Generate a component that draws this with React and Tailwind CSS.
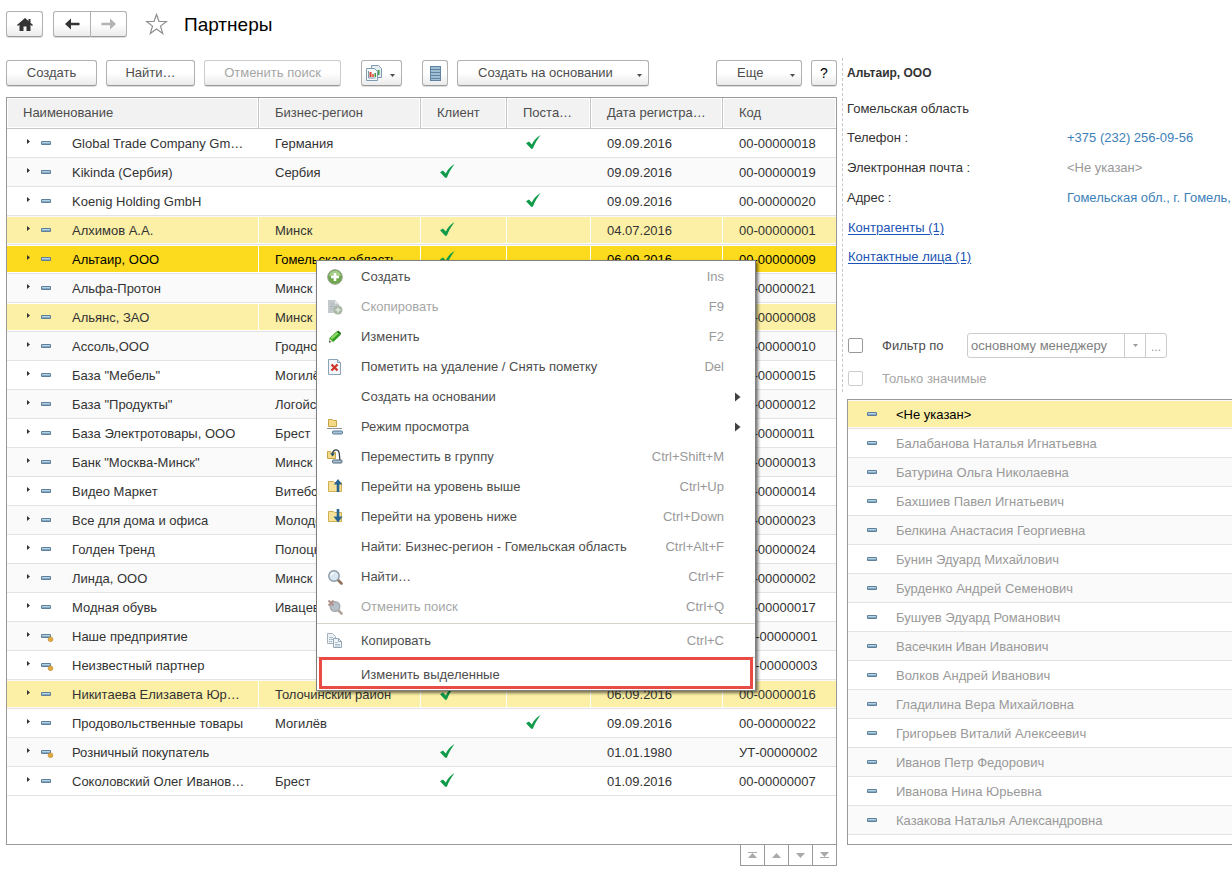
import { useState } from "react";
import clsx from "clsx";

const partners = [
  { name: "Global Trade Company Gm…", region: "Германия", supplier: true, date: "09.09.2016", code: "00-00000018" },
  { name: "Kikinda (Сербия)", region: "Сербия", client: true, date: "09.09.2016", code: "00-00000019" },
  { name: "Koenig Holding GmbH", region: "", supplier: true, date: "09.09.2016", code: "00-00000020" },
  { name: "Алхимов А.А.", region: "Минск", client: true, date: "04.07.2016", code: "00-00000001", marked: true },
  { name: "Альтаир, ООО", region: "Гомельская область", client: true, date: "06.09.2016", code: "00-00000009", current: true },
  { name: "Альфа-Протон", region: "Минск", date: "09.09.2016", code: "00-00000021" },
  { name: "Альянс, ЗАО", region: "Минск", date: "06.09.2016", code: "00-00000008", marked: true },
  { name: "Ассоль,ООО", region: "Гродно", date: "06.09.2016", code: "00-00000010" },
  { name: 'База "Мебель"', region: "Могилёв", date: "06.09.2016", code: "00-00000015" },
  { name: 'База "Продукты"', region: "Логойск", date: "06.09.2016", code: "00-00000012" },
  { name: "База Электротовары, ООО", region: "Брест", date: "06.09.2016", code: "00-00000011" },
  { name: 'Банк "Москва-Минск"', region: "Минск", date: "06.09.2016", code: "00-00000013" },
  { name: "Видео Маркет", region: "Витебск", date: "06.09.2016", code: "00-00000014" },
  { name: "Все для дома и офиса", region: "Молодечно", date: "09.09.2016", code: "00-00000023" },
  { name: "Голден Тренд", region: "Полоцк", date: "09.09.2016", code: "00-00000024" },
  { name: "Линда, ООО", region: "Минск", date: "04.07.2016", code: "00-00000002" },
  { name: "Модная обувь", region: "Ивацевичи", date: "06.09.2016", code: "00-00000017" },
  { name: "Наше предприятие", region: "", date: "01.01.1980", code: "УТ-00000001", predefined: true },
  { name: "Неизвестный партнер", region: "", date: "01.01.1980", code: "УТ-00000003", predefined: true },
  { name: "Никитаева Елизавета Юр…", region: "Толочинский район", client: true, date: "06.09.2016", code: "00-00000016", marked: true },
  { name: "Продовольственные товары", region: "Могилёв", supplier: true, date: "09.09.2016", code: "00-00000022" },
  { name: "Розничный покупатель", region: "", client: true, date: "01.01.1980", code: "УТ-00000002", predefined: true },
  { name: "Соколовский Олег Иванов…", region: "Брест", client: true, date: "01.09.2016", code: "00-00000007" },
];

const managers = [
  "<Не указан>",
  "Балабанова Наталья Игнатьевна",
  "Батурина Ольга Николаевна",
  "Бахшиев Павел Игнатьевич",
  "Белкина Анастасия Георгиевна",
  "Бунин Эдуард Михайлович",
  "Бурденко Андрей Семенович",
  "Бушуев Эдуард Романович",
  "Васечкин Иван Иванович",
  "Волков Андрей Иванович",
  "Гладилина Вера Михайловна",
  "Григорьев Виталий Алексеевич",
  "Иванов Петр Федорович",
  "Иванова Нина Юрьевна",
  "Казакова Наталья Александровна",
];

const menuItems = [
  { label: "Создать", keys: "Ins", icon: "add" },
  { label: "Скопировать", keys: "F9", icon: "clone", disabled: true },
  { label: "Изменить", keys: "F2", icon: "pencil" },
  { label: "Пометить на удаление / Снять пометку", keys: "Del", icon: "mark" },
  { label: "Создать на основании", submenu: true },
  { label: "Режим просмотра", icon: "view", submenu: true },
  { label: "Переместить в группу", keys: "Ctrl+Shift+M", icon: "move" },
  { label: "Перейти на уровень выше", keys: "Ctrl+Up", icon: "levelUp" },
  { label: "Перейти на уровень ниже", keys: "Ctrl+Down", icon: "levelDown" },
  { label: "Найти: Бизнес-регион - Гомельская область", keys: "Ctrl+Alt+F" },
  { label: "Найти…", keys: "Ctrl+F", icon: "find" },
  { label: "Отменить поиск", keys: "Ctrl+Q", icon: "findOff", disabled: true },
  { separator: true },
  { label: "Копировать", keys: "Ctrl+C", icon: "copy" },
  { separator: true },
  { label: "Изменить выделенные", highlighted: true },
];

const menuIcons = {
  add: (
    <>
      <circle cx="8" cy="8" r="7.3" fill="#6fa84c" stroke="#94a08c" />
      <path d="M2 6.5a6.2 6.2 0 0 1 12 0Q8 9 2 6.5Z" fill="#a5cd88" />
      <path d="M8 4v8M4 8h8" stroke="#fff" strokeWidth="2.6" />
    </>
  ),
  clone: (
    <>
      <path d="M1 1h7l4 4v9H1z" fill="#c3c9cd" />
      <path d="M8 1v4h4" fill="#e0e4e6" />
      <path d="M3 5h4M3 7.500h6M3 10h4" stroke="#aeb6bb" />
      <circle cx="11" cy="11" r="4.5" fill="#a9b8a4" />
      <path d="M11 8.500v5M8.500 11h5" stroke="#dfe6dc" strokeWidth="1.6" />
    </>
  ),
  pencil: (
    <>
      <path d="M2 13.500 2.500 9l7-6.500 4 3.500L6.500 12.800z" fill="#2f9e1c" />
      <path d="m3.500 8.800 6.500-5.800 1.700 1.400-6.700 6z" fill="#8ddb6c" />
      <path d="m9.500 2.500 4 3.500.5-2-2.500-2.200z" fill="#1b6a10" />
      <path d="M2 13.500 2.700 9.500l3.300 3.200z" fill="#e2e3c8" />
      <path d="m2 13.500.5-2 1.500 1.500z" fill="#333" />
    </>
  ),
  mark: (
    <>
      <path d="M1.500.5h9l3 3v12h-12z" fill="#f2f6f9" stroke="#8ba3b5" />
      <path d="M10.500.5v3h3" fill="#cddbe5" stroke="#8ba3b5" />
      <path d="m4.500 5.500 6 6m0-6-6 6" stroke="#cf3327" strokeWidth="2.2" />
    </>
  ),
  view: (
    <>
      <path d="M1.500.5h4l1 1h3v6h-8z" fill="#f3da86" stroke="#c5a24a" />
      <path d="M0 9.500h15" stroke="#8d9399" />
      <rect x="5.500" y="12" width="10" height="3" rx="1" fill="#a9c2d6" stroke="#557a98" />
    </>
  ),
  move: (
    <>
      <path d="M.5 2.500h3l1 1h4v6h-8z" fill="#f3da86" stroke="#c5a24a" />
      <path d="M5.500 4.500C6 .5 11.500-1 12.200 4l.8 8" fill="none" stroke="#39424b" strokeWidth="1.300" />
      <path d="m3.200 4 2.300 3.500L8 4.500z" fill="#1d4f78" />
      <rect x="5.500" y="11" width="9.500" height="3" rx="1" fill="#a9c2d6" stroke="#4e6577" />
    </>
  ),
  levelUp: (
    <>
      <path d="M1.500 2.500h5l1 1h7v9h-13z" fill="#f7e29a" stroke="#d2ae52" />
      <path d="M11 13V4" stroke="#28648f" strokeWidth="2.600" />
      <path d="m6.800 5.500 4.200-5.500 4.200 5.500z" fill="#28648f" />
    </>
  ),
  levelDown: (
    <>
      <path d="M1.500 2.500h5l1 1h7v9h-13z" fill="#f7e29a" stroke="#d2ae52" />
      <path d="M11 0v9" stroke="#28648f" strokeWidth="2.600" />
      <path d="m6.500 7.500 4.500 6 4.500-6z" fill="#28648f" />
    </>
  ),
  find: (
    <>
      <path d="m11 11 3.500 3.500" stroke="#93705c" strokeWidth="2.600" strokeLinecap="round" />
      <circle cx="7" cy="7" r="5.200" fill="#dbe8f1" stroke="#8a99a5" strokeWidth="1.400" />
      <path d="M4 6.500a3 3 0 0 1 3-2.500" stroke="#fff" strokeWidth="1.400" fill="none" />
    </>
  ),
  findOff: (
    <>
      <path d="m11 11 3.500 3.500" stroke="#b5a49c" strokeWidth="2.600" strokeLinecap="round" />
      <circle cx="8" cy="7.500" r="4.800" fill="#b7c1c9" stroke="#a5aaae" strokeWidth="1.400" />
      <path d="m1.500 1.500 5 5m0-5-5 5" stroke="#b0908c" strokeWidth="2" />
    </>
  ),
  copy: (
    <>
      <path d="M.5.5h5l3 3v7h-8z" fill="#eef2f5" stroke="#a4b2be" />
      <path d="M2 4.500h4M2 6.500h4M2 8.500h3" stroke="#a9bccb" />
      <path d="M6.500 5.500h5l3 3v6h-8z" fill="#f3f6f8" stroke="#94a5b3" />
      <path d="M11.500 5.500v3h3" fill="none" stroke="#94a5b3" />
      <path d="M8 9.500h3M8 11.500h5M8 13h5" stroke="#a9bccb" />
    </>
  ),
};

function Button({ className, children, ...props }) {
  return (
    <button
      type="button"
      className={clsx(
        "flex h-[26px] shrink-0 items-center rounded-[3px] border border-[#b0b0b0] border-b-[#999] bg-linear-to-b from-white from-50% to-[#ebebeb] shadow-[0_1px_0_#ddd]",
        className
      )}
      {...props}
    >
      {children}
    </button>
  );
}

function Caret({ className }) {
  return (
    <svg className={clsx("h-[3px] w-[5px] shrink-0", className)} viewBox="0 0 5 3" fill="currentColor">
      <path d="M0 0h5L2.500 3z" />
    </svg>
  );
}

function ItemIcon({ predefined }) {
  return (
    <svg className="mb-[2px] h-3 w-[13px] shrink-0" viewBox="0 0 13 12">
      <rect x="0" y="4" width="10" height="4" rx="1" fill="#5f7f9b" />
      <path d="M1 5.500h8" stroke="#b4d4e6" />
      <path d="M1 6.500h8" stroke="#86a9c2" />
      {predefined && <circle cx="9.500" cy="9.300" r="2.400" fill="#e2a93c" stroke="#b98a38" strokeWidth=".6" />}
    </svg>
  );
}

function Check() {
  return (
    <svg className="mb-1 ml-[3px] h-[14px] w-[15px]" viewBox="0 0 15 14">
      <path d="M0 8.200 3 6.500l2.800 3C7.500 5.800 10.500 2.200 14.500 0 11.200 4.500 8.700 9 6.800 13.800H5.200z" fill="#0f9b4a" />
    </svg>
  );
}

function Cell({ row, className, children, last }) {
  return (
    <td className="h-[29px] border-b border-[#e3e3e3] p-0">
      <div
        className={clsx(
          "flex h-[26px] items-center overflow-hidden pt-[2px] whitespace-nowrap",
          row.current && "bg-[#fcdb1f] text-black",
          row.marked && "bg-[#fcf0a6]",
          (row.current || row.marked) && !last && "border-r border-white",
          className
        )}
      >
        {children}
      </div>
    </td>
  );
}

function PartnersTable() {
  const columns = ["Наименование", "Бизнес-регион", "Клиент", "Поста…", "Дата регистра…", "Код"];
  return (
    <table className="w-full table-fixed border-separate border-spacing-0">
      <colgroup>
        <col />
        <col className="w-[162px]" />
        <col className="w-[86px]" />
        <col className="w-[84px]" />
        <col className="w-[132px]" />
        <col className="w-[113px]" />
      </colgroup>
      <thead>
        <tr>
          {columns.map((title) => (
            <th
              key={title}
              scope="col"
              className="h-[31px] border-r border-b border-[#c6c6c6] p-px text-left font-normal text-[#4d4d4d] last:border-r-0"
            >
              <div className="flex h-7 items-center bg-[#f2f2f2] pl-[15px] whitespace-nowrap">{title}</div>
            </th>
          ))}
        </tr>
      </thead>
      <tbody>
        {partners.map((row) => (
          <tr key={row.code} className="even:bg-[#fafafa]">
            <Cell row={row} className="pl-[20px]">
              <svg className="mb-[5px] h-[5px] w-[3px] shrink-0" viewBox="0 0 3 5" fill="#333">
                <path d="M0 0l3 2.500L0 5z" />
              </svg>
              <span className="ml-[11px]">
                <ItemIcon predefined={row.predefined} />
              </span>
              <span className="ml-[18px]">{row.name}</span>
            </Cell>
            <Cell row={row} className="pl-4">{row.region}</Cell>
            <Cell row={row} className="pl-4">{row.client && <Check />}</Cell>
            <Cell row={row} className="pl-4">{row.supplier && <Check />}</Cell>
            <Cell row={row} className="pl-4">{row.date}</Cell>
            <Cell row={row} className="pl-4" last>{row.code}</Cell>
          </tr>
        ))}
      </tbody>
    </table>
  );
}

function ContextMenu() {
  return (
    <div
      role="menu"
      className="absolute top-[162px] left-[309px] w-[440px] border border-[#808080] bg-white py-px text-[#4d4d4d] shadow-[2px_2px_3px_rgba(0,0,0,0.55)]"
    >
      {menuItems.map((item, i) =>
        item.separator ? (
          <div key={i} role="separator" className="mt-px mb-[2px] h-px bg-[#d6d3c6]" />
        ) : (
          <button
            key={item.label}
            type="button"
            role="menuitem"
            disabled={item.disabled}
            className={clsx(
              "flex items-center text-left whitespace-nowrap",
              item.disabled && "text-[#a6a6a6]",
              item.highlighted
                ? "mx-[2px] -mt-[3px] h-8 w-[434px] border-3 border-[#e84c45] pt-[3px] pr-[27px] pl-[5px]"
                : "h-[30px] w-full pr-[14px] pl-[10px]"
            )}
          >
            <svg className="h-4 w-4 shrink-0" viewBox="0 0 16 16" fill="none">
              {menuIcons[item.icon]}
            </svg>
            <span className="ml-[18px] flex-1">{item.label}</span>
            <span className="text-[#999]">{item.keys}</span>
            <svg className="ml-[11px] h-[10px] w-[6px] shrink-0" viewBox="0 0 6 10" fill="#404040">
              {item.submenu && <path d="M0 0.500 5.500 5 0 9.500z" />}
            </svg>
          </button>
        )
      )}
    </div>
  );
}

const scrollButtons = [
  { label: "В начало", d: "M0 0h9v1H0zM4.500 1 9 6H0z" },
  { label: "Выше", d: "M4.500 1 9 6H0z" },
  { label: "Ниже", d: "M0 1h9L4.500 6z" },
  { label: "В конец", d: "M0 0h9L4.500 5zM0 5h9v1H0z" },
];

function PartnerCard() {
  const [byManager, setByManager] = useState(false);
  const [filter, setFilter] = useState("основному менеджеру");
  return (
    <section className="h-[334px] overflow-hidden border-l border-dashed border-[#c8c8c8] pl-1 whitespace-nowrap text-[#333]">
      <h2 className="flex h-[30px] items-center text-[12px] font-bold">Альтаир, ООО</h2>
      <p className="mt-[6px] flex h-[29px] items-center">Гомельская область</p>
      <dl className="grid grid-cols-[220px_1fr]">
        <dt className="flex h-[30px] items-center">Телефон :</dt>
        <dd className="flex h-[30px] items-center text-[#3d7fb8]">+375 (232) 256-09-56</dd>
        <dt className="flex h-[30px] items-center">Электронная почта :</dt>
        <dd className="flex h-[30px] items-center text-[#999]">&lt;Не указан&gt;</dd>
        <dt className="flex h-[29px] items-center">Адрес :</dt>
        <dd className="flex h-[29px] items-center text-[#3d7fb8]">Гомельская обл., г. Гомель,</dd>
      </dl>
      <div className="flex flex-col items-start pl-px text-[#1a53b5]">
        <a href="#contractors" className="h-[29px] pt-2 leading-4 underline underline-offset-2">Контрагенты (1)</a>
        <a href="#contacts" className="h-[29px] pt-2 leading-4 underline underline-offset-2">Контактные лица (1)</a>
      </div>
      <div className="mt-[62px] flex h-[26px] items-center pl-px">
        <input
          id="by-manager"
          type="checkbox"
          checked={byManager}
          onChange={(e) => setByManager(e.target.checked)}
          className="h-[15px] w-[15px] appearance-none rounded-[2px] border border-[#999] bg-white checked:bg-[#fcdb1f]"
        />
        <label htmlFor="by-manager" className="w-[104px] pt-[2px] pl-[19px] text-[#4d4d4d]">Фильтр по</label>
        <div className="flex h-[25px] w-[200px] rounded-[3px] border border-[#ccc] text-[#999]">
          <input
            type="text"
            aria-label="Фильтр по"
            value={filter}
            onChange={(e) => setFilter(e.target.value)}
            className="min-w-0 flex-1 pt-[2px] pl-[3px] text-[#808080] outline-none"
          />
          <button type="button" aria-label="Выбрать из списка" className="flex w-[21px] items-center justify-center border-l border-[#ccc]">
            <Caret />
          </button>
          <button type="button" aria-label="Показать все" className="w-[21px] border-l border-[#ccc] pt-1 text-[12px]">...</button>
        </div>
      </div>
      <div className="mt-[7px] flex h-[26px] items-center pl-px">
        <input
          id="significant"
          type="checkbox"
          disabled
          className="h-[15px] w-[15px] appearance-none rounded-[2px] border border-[#ccc] bg-white"
        />
        <label htmlFor="significant" className="pt-[2px] pl-[19px] text-[#a6a6a6]">Только значимые</label>
      </div>
    </section>
  );
}

export default function App() {
  return (
    <div className="flex min-h-screen flex-col overflow-hidden bg-white font-['Liberation_Sans',Arial,sans-serif] text-[13px] leading-4 text-[#333]">
      <header className="flex h-[58px] items-start pt-[11px] pl-[6px]">
        <Button className="w-[37px] justify-center" aria-label="Начальная страница">
          <svg className="h-[13px] w-4" viewBox="0 0 16 13" fill="#333">
            <path d="M8 0 0 7l1 1 1.500-1.200V13h4V8.500h3V13h4V6.800L15 8l1-1-2.500-2.200V1h-2v2z" />
          </svg>
        </Button>
        <div className="ml-[10px] flex">
          <Button className="w-[38px] justify-center rounded-r-none" aria-label="Назад">
            <svg className="h-3 w-[15px]" viewBox="0 0 15 12" fill="#333">
              <path d="M0 6l6-5.500v4.200h8.500v2.600H6v4.200z" />
            </svg>
          </Button>
          <Button className="w-9 justify-center rounded-l-none border-l-0" aria-label="Вперед" disabled>
            <svg className="h-3 w-[15px]" viewBox="0 0 15 12" fill="#b3b3b3">
              <path d="M15 6 9 .5v4.200H.5v2.600H9v4.200z" />
            </svg>
          </Button>
        </div>
        <button type="button" aria-label="В избранное" className="ml-[18px] flex h-[26px] items-center">
          <svg className="h-[22px] w-[23px]" viewBox="0 0 23 22" fill="none" stroke="#8c8c8c" strokeWidth="1.200">
            <path d="m11.500 1.500 2.500 7h7.500l-6 4.600 2.200 7.300-6.200-4.400-6.200 4.400 2.200-7.300-6-4.600H9z" />
          </svg>
        </button>
        <h1 className="ml-4 flex h-[26px] items-center pt-px text-[19px] text-black">Партнеры</h1>
      </header>

      <div className="flex flex-1">
        <main className="flex min-w-0 flex-1 flex-col pb-[3px] pl-[6px]">
          <div className="flex h-[39px] items-start pt-[2px] text-[#4d4d4d]">
            <Button className="w-[91px] justify-center">Создать</Button>
            <Button className="ml-[9px] w-[89px] justify-center">Найти…</Button>
            <Button className="ml-[9px] w-[137px] justify-center border-[#ccc] text-[#a6a6a6]" disabled>Отменить поиск</Button>
            <Button className="ml-5 w-[41px] justify-between pr-[6px] pl-1" aria-label="Отчеты">
              <svg className="h-4 w-4" viewBox="0 0 16 16">
                <path d="M5.500.5h7l3 3v9h-10z" fill="#e6eef3" stroke="#7f9cb1" />
                <path d="M12.500 5v5" stroke="#3f9a3f" strokeWidth="2" />
                <path d="M.5 3.500h8l3 3v9H.5z" fill="#f5f9fb" stroke="#7f9cb1" />
                <path d="M2.500 6v7h7" fill="none" stroke="#7f9cb1" />
                <path d="M4.500 7v5" stroke="#d8402f" strokeWidth="2" />
                <path d="M7 9v3" stroke="#d8402f" strokeWidth="1.500" />
                <path d="M9.300 8v4" stroke="#3f9a3f" strokeWidth="1.500" />
              </svg>
              <Caret className="mt-1" />
            </Button>
            <Button className="ml-5 w-[26px] justify-center" aria-label="Список">
              <svg className="h-[15px] w-[11px]" viewBox="0 0 11 15">
                <rect x=".5" y=".5" width="10" height="14" fill="#9fbdd3" stroke="#5f83a0" />
                <path d="M0 3.500h11M0 6.500h11M0 9.500h11M0 12.500h11" stroke="#5f83a0" />
              </svg>
            </Button>
            <Button className="ml-[9px] w-[192px] justify-between pr-[6px] pl-5">
              Создать на основании
              <Caret className="mt-1" />
            </Button>
            <Button className="ml-auto w-[86px] justify-between pr-[6px] pl-5">
              Еще
              <Caret className="mt-1" />
            </Button>
            <Button className="ml-[9px] w-[26px] justify-center text-[14px] text-black" aria-label="Справка">?</Button>
          </div>

          <div className="relative flex-1 border border-[#999]">
            <PartnersTable />
            <ContextMenu />
          </div>
          <div className="flex h-[21px] justify-end">
            {scrollButtons.map((b) => (
              <button
                key={b.label}
                type="button"
                aria-label={b.label}
                className="flex w-6 items-center justify-center border-b border-l border-[#999] last:w-[25px] last:border-r"
              >
                <svg className="h-[6px] w-[9px]" viewBox="0 0 9 6" fill="#aaa">
                  <path d={b.d} />
                </svg>
              </button>
            ))}
          </div>
        </main>

        <aside className="ml-[5px] flex w-[390px] flex-col pb-6">
          <PartnerCard />
          <ul className="mt-[7px] ml-[5px] flex-1 border border-r-0 border-[#999] text-[#999]">
            {managers.map((name, i) => (
              <li key={name} className="h-[29px] border-b border-[#e3e3e3] py-px odd:bg-[#fafafa] first:bg-white">
                <div className={clsx("flex h-[26px] items-center pt-[2px] pl-[19px]", i === 0 && "bg-[#fcf0a6] text-black")}>
                  <ItemIcon />
                  <span className="ml-4">{name}</span>
                </div>
              </li>
            ))}
          </ul>
        </aside>
      </div>
    </div>
  );
}
